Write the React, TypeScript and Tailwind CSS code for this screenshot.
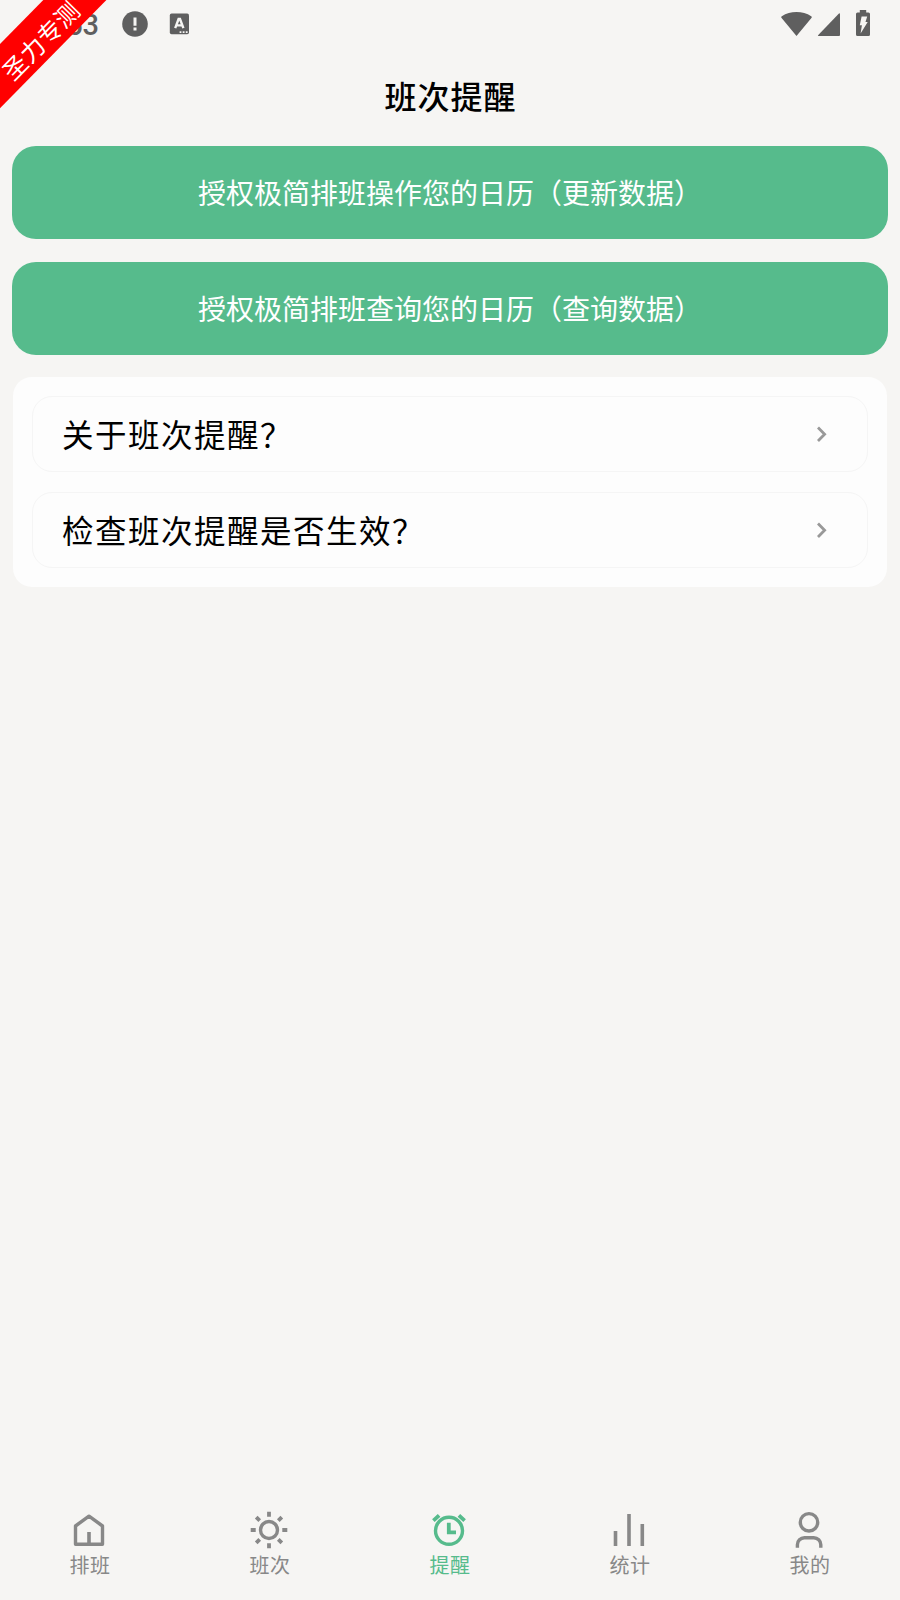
import React, { useState } from 'react';

interface Tab {
  id: string;
  label: string;
  icon: React.ReactNode;
}

const tabs: Tab[] = [
  {
    id: 'schedule',
    label: '排班',
    icon: (
      <>
        <path d="M20 6.2 6.5 16v18.2h27V16Z" strokeLinejoin="round" />
        <path d="M20 22v12" strokeWidth="3.6" />
      </>
    ),
  },
  {
    id: 'shift',
    label: '班次',
    icon: (
      <>
        <circle cx="20" cy="20" r="8.5" />
        <path
          d="M20 1.7v5M20 33.3v5M1.7 20h5M33.3 20h5M7.2 7.2l3.5 3.5M29.3 29.3l3.5 3.5M7.2 32.8l3.5-3.5M29.3 10.7l3.5-3.5"
          strokeWidth="3.8"
        />
      </>
    ),
  },
  {
    id: 'reminder',
    label: '提醒',
    icon: (
      <>
        <circle cx="20" cy="20.8" r="13.5" />
        <path d="M19.8 12.7v9.6H27M4.4 10.7l5.7-5.3M35.6 10.7l-5.7-5.3" strokeWidth="3.8" />
      </>
    ),
  },
  {
    id: 'stats',
    label: '统计',
    icon: <path d="M6.5 21v15M20 4v32M33.3 14v22" strokeWidth="3.6" />,
  },
  {
    id: 'mine',
    label: '我的',
    icon: (
      <>
        <circle cx="20" cy="12.3" r="8.7" />
        <path d="M8.4 37.7v-3a7 7 0 0 1 7-7h9.4a7 7 0 0 1 7 7v3" />
      </>
    ),
  },
];

const permissions = [
  '授权极简排班操作您的日历（更新数据）',
  '授权极简排班查询您的日历（查询数据）',
];

const questions = ['关于班次提醒？', '检查班次提醒是否生效？'];

const StatusBar = () => (
  <div className="flex h-12 items-center justify-between pl-[42px] pr-[29px] text-[#5f5f5f]">
    <div className="flex items-center">
      <span className="w-[57px] pt-[3px] text-right font-['Roboto'] text-[29px] font-medium leading-none">3:53</span>
      <svg className="ml-[23px] h-[26px] w-[26px]" viewBox="0 0 26 26">
        <circle cx="13" cy="13" r="12.8" fill="currentColor" />
        <path d="M11.5 6.5h3v8.3h-3zM11.5 16.5h3v3h-3z" fill="#f6f5f3" />
      </svg>
      <svg className="ml-[21px] h-[22px] w-[22px]" viewBox="0 0 22 22">
        <rect x="0.8" y="0.6" width="19.2" height="20.6" rx="1.8" fill="currentColor" />
        <path d="M6.2 15.2 9.6 6H11l3.4 9.2M7.4 12.4h5.8" fill="none" stroke="#f6f5f3" strokeWidth="2.4" />
        <path d="M10.6 18.3h1.8v1.8h-1.8zM13.7 18.3h1.8v1.8h-1.8zM16.8 18.3h1.8v1.8h-1.8z" fill="#f6f5f3" />
      </svg>
    </div>
    <div className="flex items-center">
      <svg className="h-[26px] w-8" viewBox="0 0 32 26" fill="currentColor">
        <path d="M16.5 25 1.4 6.7Q.8 5.8 1.8 5.2 8.4 1 16.5 1t14.7 4.2q1 .6.4 1.5Z" />
      </svg>
      <svg className="ml-[5px] h-[26px] w-6" viewBox="0 0 24 26" fill="currentColor">
        <path d="M21.7 2.7q1.3-1 1.3.6v20.8q0 1-1 1H1.8q-1.6 0-.5-1.2Z" />
      </svg>
      <svg className="-mt-0.5 ml-[14px] h-[26px] w-4" viewBox="0 0 16 26">
        <path
          d="M4.8 0h6.4v2.6h2.3q1.5 0 1.5 1.5v20.4q0 1.5-1.5 1.5h-11Q1 26 1 24.5V4.1q0-1.5 1.5-1.5h2.3Z"
          fill="currentColor"
        />
        <path d="M6.6 6.6h5.6l-1.7 5.3h2.2L5.6 23.6l1.3-8.3H4.8Z" fill="#f6f5f3" />
      </svg>
    </div>
  </div>
);

const App: React.FC = () => {
  const [activeTab, setActiveTab] = useState('reminder');

  return (
    <div className="relative flex h-[1600px] w-[900px] flex-col overflow-hidden bg-[#f6f5f3] font-['Noto_Sans_CJK_SC',sans-serif]">
      <StatusBar />

      {/* Corner ribbon */}
      <div className="absolute left-[-62px] top-[15px] flex h-[45px] w-[200px] rotate-[-45.5deg] items-center justify-center bg-[#ff0000] pt-[6px] text-[24px] font-normal leading-none tracking-[0.6px] text-white">
        <span>圣力专测</span>
      </div>

      {/* Header */}
      <h1 className="flex h-[98px] items-center justify-center pb-[5px] pl-px text-[32px] font-medium leading-none tracking-[1px] text-black">
        班次提醒
      </h1>

      <main className="flex flex-1 flex-col px-3">
        <div className="flex flex-col gap-[23px]">
          {permissions.map((text) => (
            <button
              key={text}
              className="h-[93px] rounded-[24px] bg-[#56bb8c] pb-px text-[28px] leading-none text-white"
            >
              {text}
            </button>
          ))}
        </div>

        {/* Questions */}
        <div className="mx-px mt-[22px] flex flex-col gap-5 rounded-[19px] bg-[#fdfdfd] p-[19px]">
          {questions.map((text) => (
            <button
              key={text}
              className="flex h-[76px] items-center justify-between rounded-[20px] border border-[#f5f5f5] pl-[29px] pr-[39px]"
            >
              <span className="pb-px text-[31.5px] leading-none tracking-[1.5px] text-black">{text}</span>
              <svg className="h-4 w-3" viewBox="0 0 12 16" fill="none" stroke="#999" strokeWidth="2.8">
                <path d="m2 1.6 6.6 6.7L2 15" />
              </svg>
            </button>
          ))}
        </div>
      </main>

      {/* Tab bar */}
      <nav className="grid h-[100px] grid-cols-5">
        {tabs.map((tab) => (
          <button
            key={tab.id}
            onClick={() => setActiveTab(tab.id)}
            className={`flex flex-col items-center pt-[10px] ${activeTab === tab.id ? 'text-[#56bb8c]' : 'text-[#888888]'}`}
          >
            <svg
              className="mr-0.5 h-10 w-10"
              viewBox="0 0 40 40"
              fill="none"
              stroke="currentColor"
              strokeWidth="3.4"
            >
              {tab.icon}
            </svg>
            <span className="mt-[5px] text-[20px] leading-none tracking-[0.6px]">{tab.label}</span>
          </button>
        ))}
      </nav>
    </div>
  );
};

export default App;
